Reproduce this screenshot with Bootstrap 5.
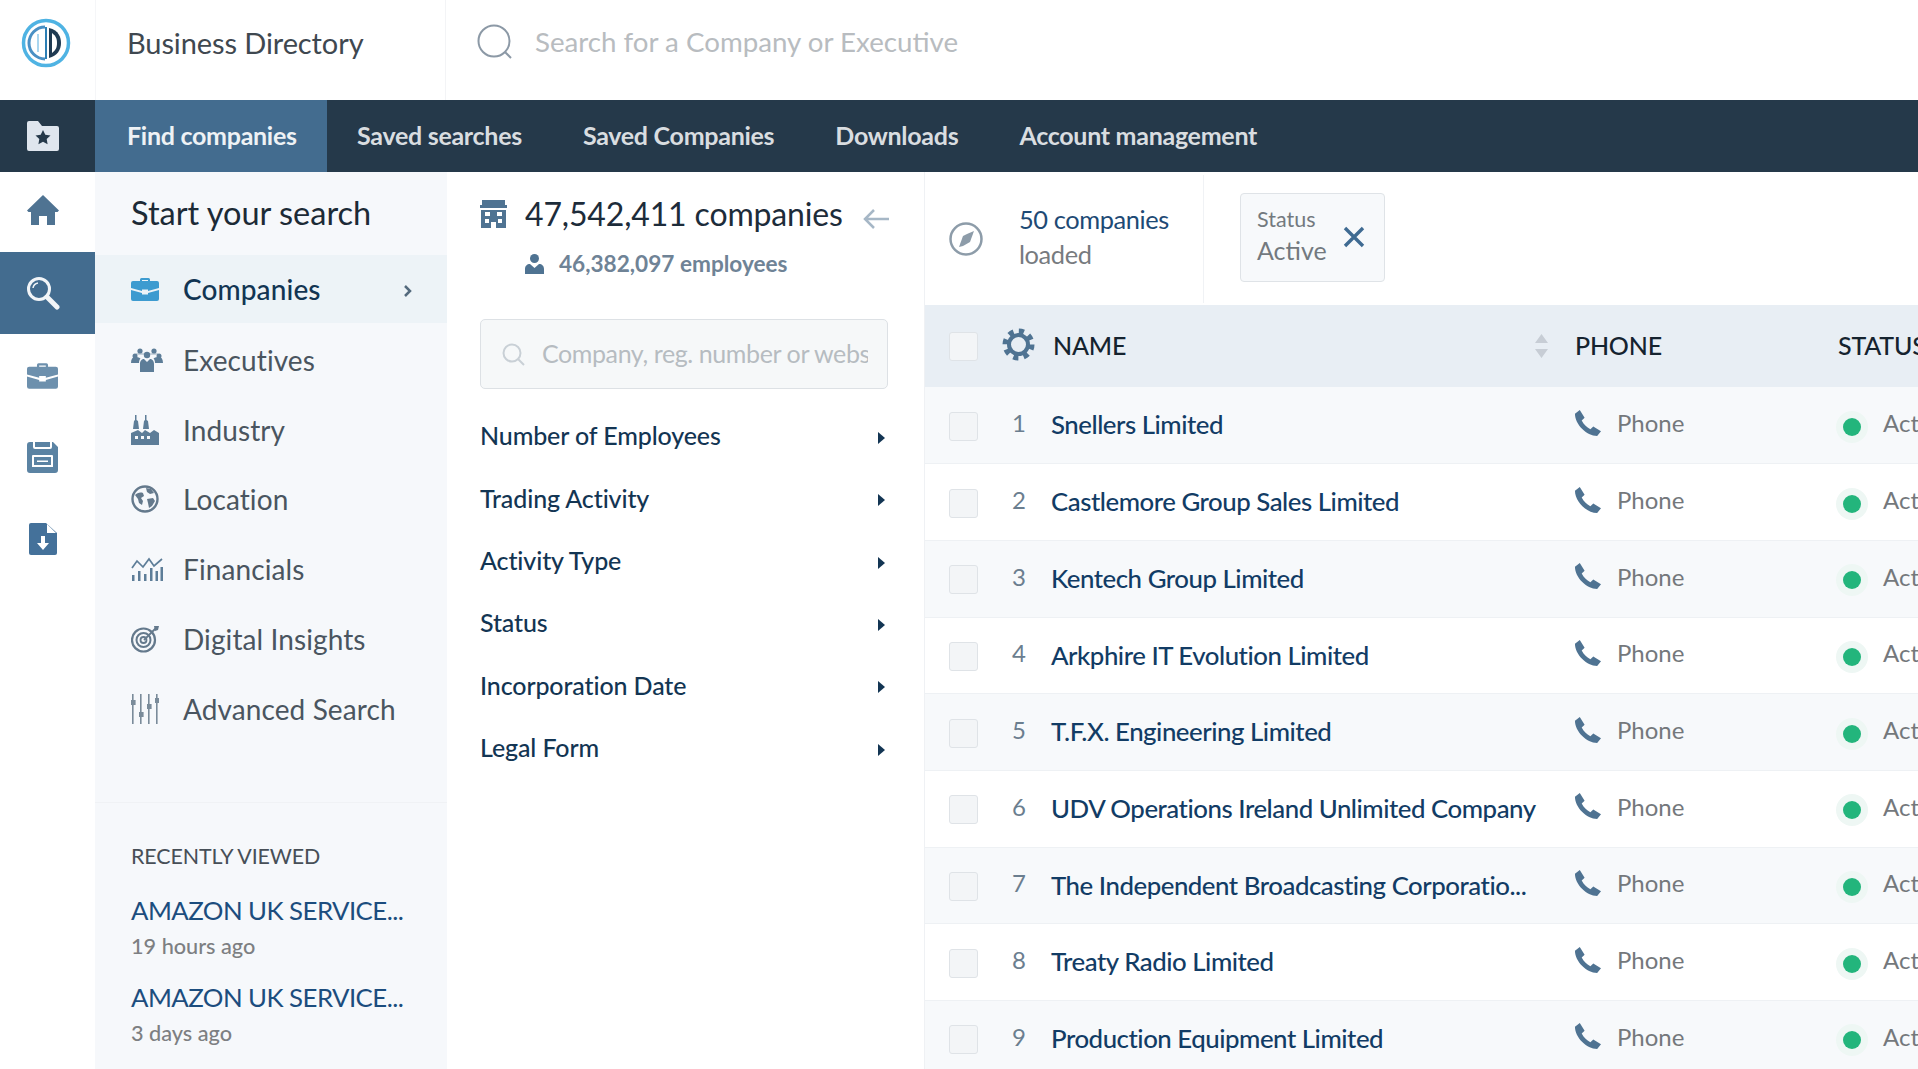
<!DOCTYPE html>
<html lang="en">
<head>
<meta charset="UTF-8">
<title>Business Directory</title>
<link href="https://cdn.jsdelivr.net/npm/bootstrap@5.3.3/dist/css/bootstrap.min.css" rel="stylesheet">
<style>
    html, body { height: 100%; overflow: hidden; }
    body { font-family: Lato, "Liberation Sans", sans-serif; background: #fff; color: #1d2c3a; width: 1918px; height: 1069px; }
    svg { display: block; flex: none; }

    /* top bar */
    .top-bar { height: 100px; }
    .logo-cell { width: 95px; padding: 0 4px 15px 0; }
    .brand-cell { width: 351px; padding: 0 0 15px 31px; border-right: 1px solid #f3f4f6; border-left: 1px solid #f5f6f8; font-size: 29px; color: #3f4850; letter-spacing: -.1px; }
    .top-search { padding: 0 0 16px 30px; gap: 21px; font-size: 27.7px; color: #b8bcc0; }

    /* dark nav */
    .main-nav { height: 72px; background: #25394a; padding: 0; flex-wrap: nowrap; justify-content: flex-start; }
    .nav-icon { width: 95px; padding-right: 10px; }
    .main-nav .nav-link { height: 72px; display: flex; align-items: center; padding: 0 30.5px; font-size: 25px; font-weight: 700; letter-spacing: -.28px; color: #d9dde0; }
    .main-nav .nav-link.active { background: #436c8f; color: #eef2f5; width: 232px; padding-left: 32px; padding-right: 0; }
    .main-nav .nav-item:nth-child(2) .nav-link { padding-left: 30px; }

    /* left rail */
    .work-area { height: 897px; }
    .rail { width: 95px; }
    .rail-item { height: 82px; padding-right: 10px; }
    .rail-item:first-child { height: 80px; padding-bottom: 4px; }
    .rail-item.on { background: #436c8f; }

    /* search sidebar */
    .side-panel { width: 352px; background: #f6f8fb; }
    .side-title { font-size: 32.5px; height: 83px; padding: 21px 0 0 36px; color: #1c2a36; line-height: 40px; }
    .side-link { height: 69.8px; padding-left: 36px; font-size: 28px; color: #4a5560; letter-spacing: .1px; }
    .side-link.on { background: #edf3f7; color: #123553; height: 68px; margin-bottom: 2px; font-weight: 500; }
    .side-ico { width: 52px; }
    .side-caret { margin: 3px 34px 0 auto; }
    .recent-box { margin-top: 58px; border-top: 1px solid #f0f2f5; padding: 40px 0 0 36px; }
    .recent-head { font-size: 21.4px; color: #474f57; line-height: 26px; margin-bottom: 24px; letter-spacing: -.1px; }
    .recent-name { font-size: 25.8px; line-height: 34px; color: #1c4d7e; letter-spacing: -.55px; }
    .recent-when { font-size: 21.7px; line-height: 28px; color: #7d7f82; font-weight: 500; margin-bottom: 20px; margin-top: 5px; }

    /* filter panel */
    .filter-panel { width: 478px; padding: 0 36px 0 33px; border-right: 1px solid #eff1f4; }
    .count-line { padding-top: 21px; font-size: 32px; line-height: 42px; color: #1d2c3a; letter-spacing: -.15px; }
    .count-line span { margin-left: 2px; }
    .count-arrow { margin-left: auto; margin-right: -2px; margin-top: 10px; }
    .emp-line { padding: 15px 0 0 45px; gap: 15px; font-size: 22.6px; line-height: 28px; font-weight: 700; color: #6f8396; }
    .filter-input { margin-top: 41px; height: 70px; background: #f6f8f9; border: 1px solid #dde1e5; border-radius: 5px; padding-left: 21px; gap: 17px; font-size: 25px; color: #b6bcc1; overflow: hidden; white-space: nowrap; padding-right: 19px; letter-spacing: -.4px; }
    .filter-input span { overflow: hidden; }
    .filter-list { margin-top: 16px; }
    .filter-row { height: 62.3px; font-size: 25px; font-weight: 500; color: #133553; letter-spacing: -.12px; }
    .filter-row i { width: 0; height: 0; margin: 4px 3px 0 0; border-left: 7px solid #133553; border-top: 6.5px solid transparent; border-bottom: 6.5px solid transparent; }

    /* results */
    .result-area { flex: 1; min-width: 0; overflow: hidden; }
    .tool-strip { height: 133px; }
    .loaded-cell { width: 279px; height: 128px; padding-left: 24px; gap: 36px; border-right: 1px solid #f0f2f5; }
    .loaded-text { font-size: 25.4px; line-height: 35px; color: #1e4a75; letter-spacing: -.4px; margin-top: -3px; }
    .loaded-text div + div { color: #777b7f; }
    .status-chip { margin-left: 36px; margin-top: -3px; width: 145px; height: 89px; background: #f7f9fb; border: 1px solid #dfe3e7; border-radius: 4px; padding: 0 0 0 16px; gap: 16px; }
    .chip-text { margin-top: -5px; }
    .status-chip small { display: block; font-size: 21.5px; line-height: 30px; color: #73797f; }
    .status-chip b { display: block; font-size: 25px; line-height: 32px; font-weight: 400; color: #73797f; }

    .co-table { table-layout: fixed; width: 1100px; margin: 0; border-collapse: collapse; }
    .co-table > :not(caption) > * > * { padding: 0; box-shadow: none; background: transparent; border: 0; vertical-align: middle; }
    .co-table thead tr { height: 82px; background: #e8eef4; }
    .co-table th { font-size: 25px; font-weight: 500; color: #15232f; letter-spacing: -.2px; }
    .co-table tbody tr { height: 76.7px; border-bottom: 1px solid #eef1f4; }
    .co-table tbody tr:nth-child(odd) { background: #f7f9fb; }
    .co-table .form-check-input { width: 29px; height: 29px; margin: 0 0 0 24px; background-color: #f3f5f7; border: 1px solid #dfe3e7; border-radius: 3px; display: block; float: none; }
    .co-table tbody .form-check-input { margin-top: 2px; }
    .row-num { font-size: 24px; color: #6b7e8f; padding: 0 0 4px 19px !important; }
    .row-name { font-size: 25.8px; font-weight: 500; color: #123c65; letter-spacing: -.47px; white-space: nowrap; padding-bottom: 1px !important; }
    .phone-cell { font-size: 24px; color: #74787c; margin-bottom: 4px; }
    .status-dot { width: 18px; height: 18px; border-radius: 50%; background: #23b57c; box-shadow: 0 0 0 7px #eef7f4; margin: 7px 22px 0 5px; flex: none; }
    .sort-pair { margin-right: 26px; }
    .gear-ico { margin: 0 0 4px 9px; }
    .name-head { padding-left: 2px; }
    .phone-head { padding-left: 1px !important; }
</style>
</head>
<body>

<svg width="0" height="0" class="position-absolute">
    <symbol id="i-brief" viewBox="0 0 28 24"><path fill="currentColor" d="M9 4V2.500A1.500 1.500 0 0 1 10.500 1h7A1.500 1.500 0 0 1 19 2.500V4h7a2 2 0 0 1 2 2v5l-11 3v-1.500h-6V14L0 11V6a2 2 0 0 1 2-2zm2 0h6V3h-6zM0 13l11 3v1.500h6V16l11-3v9a2 2 0 0 1-2 2H2a2 2 0 0 1-2-2z"/></symbol>
    <symbol id="i-people" viewBox="0 0 32 24"><g fill="currentColor"><circle cx="9" cy="3" r="2.600"/><circle cx="23" cy="3" r="2.600"/><circle cx="16" cy="7" r="3.200"/><circle cx="4" cy="8" r="2.500"/><circle cx="28" cy="8" r="2.500"/><path d="M4 9c-2.500 0-4 2-4 6h8c0-2 .5-3.500 1.500-4.500C8 9 6 9 4 9zM28 9c2.500 0 4 2 4 6h-8c0-2-.5-3.500-1.500-4.500C24 9 26 9 28 9zM9 24V16c0-3.500 2-5 4-5l3 3 3-3c2 0 4 1.500 4 5v8z"/><path d="M5 6.500h8v-1H5zM19 6.500h8v-1h-8z" opacity=".6"/></g></symbol>
    <symbol id="i-factory" viewBox="0 0 28 30"><g fill="currentColor"><path d="M4 0h1.500v5L7 6l1 8H2l1-8 1-1zM14 0h1.500v5L17 6l1 8h-6l1-8 1-1z"/><path d="M0 30V18l7-3 4 3 3-3 5 3 4-3 5 3v12zM4 21v3h3v-3zm6 0v3h3v-3zm6 0v3h3v-3z" fill-rule="evenodd"/></g></symbol>
    <symbol id="i-globe" viewBox="0 0 28 28"><circle cx="14" cy="14" r="12.500" fill="none" stroke="currentColor" stroke-width="2.400"/><path fill="currentColor" d="M4 10c2-2 5-3 8-2l1 3-3 2 2 3-1 4-3-2-1-4zM15 3l5 1 3 4-4 1-3-2zM16 14l6-1 2 3-3 5-3 2-1-5z"/></symbol>
    <symbol id="i-fin" viewBox="0 0 32 24"><g fill="currentColor"><path d="M1 18h2.500v6H1zM7 14h2.500v10H7zM13 17h2.500v7H13zM19 11h2.500v13H19zM24.500 14H27v10h-2.500zM29.500 10H32v14h-2.500z"/></g><path fill="none" stroke="currentColor" stroke-width="1.700" d="M1 11l5-7 6 6 6-8 5 7 8-7"/></symbol>
    <symbol id="i-target" viewBox="0 0 28 28"><g fill="none" stroke="currentColor"><circle cx="12.500" cy="15" r="11.500" stroke-width="2.200"/><circle cx="12.500" cy="15" r="7" stroke-width="2"/><circle cx="12.500" cy="15" r="3" stroke-width="1.800"/><path d="M13 15L25 3" stroke-width="1.800"/></g><path fill="currentColor" d="M23 1l5 0-1 4-3 1z"/></symbol>
    <symbol id="i-sliders" viewBox="0 0 28 30"><g fill="currentColor"><path d="M1 0h1.600v30H1zM9 0h1.600v30H9zM17 0h1.600v30H17zM25 0h1.600v30H25z"/><path d="M0 6h4.600v5H0zM8 18h4.600v5H8zM16 10h4.600v5H16zM24 4h4.600v5H24z"/></g></symbol>
    <symbol id="i-home" viewBox="0 0 32 30"><path fill="currentColor" d="M16 0L32 15.500l-1.500 1.500H28v13h-8v-9h-8v9H4V17H1.500L0 15.500z"/></symbol>
    <symbol id="i-phone" viewBox="0 0 28 28"><path fill="currentColor" d="M1 4L6 0l5 8-3 3c2 4 5 7 9 9l3-3 8 5-4 5C13 27 1 15 1 4z"/></symbol>
</svg>

<header class="top-bar d-flex">
    <div class="logo-cell d-flex align-items-center justify-content-center">
        <svg width="50" height="50" viewBox="0 0 50 50" fill="none">
            <circle cx="25" cy="25" r="22.500" stroke="#4fb3e3" stroke-width="3.500"/>
            <path d="M24 9A16 16 0 0 0 24 41" stroke="#4a90c4" stroke-width="3"/>
            <path d="M17 34V16" stroke="#8ec8ea" stroke-width="1.500"/>
            <path d="M25 9V41" stroke="#2d7fb5" stroke-width="2"/>
            <path d="M28 10C38 12 40 20 40 25C40 32 36 38 28 40Z" fill="#1f3a52"/>
            <path d="M31 15C35 18 36 21 36 25C36 29 35 32 31 35Z" fill="#fff"/>
        </svg>
    </div>
    <div class="brand-cell d-flex align-items-center">Business Directory</div>
    <div class="top-search d-flex align-items-center">
        <svg width="38" height="38" viewBox="0 0 38 38" fill="none" stroke="#8c99a6" stroke-width="2"><circle cx="18" cy="18" r="15.500"/><path d="M29 29l6 6"/></svg>
        <span>Search for a Company or Executive</span>
    </div>
</header>

<nav class="navbar main-nav">
    <div class="nav-icon d-flex align-items-center justify-content-center">
        <svg width="34" height="32" viewBox="0 0 34 32"><path fill="#dfe6ee" d="M1 3a2 2 0 0 1 2-2h9l4 5h15a2 2 0 0 1 2 2v21a2 2 0 0 1-2 2H3a2 2 0 0 1-2-2z"/><path fill="#25394a" d="M17 10l2.300 4.800 5.200.7-3.800 3.600.9 5.200L17 21.800l-4.600 2.500.9-5.200-3.800-3.600 5.200-.7z"/></svg>
    </div>
    <ul class="navbar-nav flex-row">
        <li class="nav-item"><a class="nav-link active" href="#">Find companies</a></li>
        <li class="nav-item"><a class="nav-link" href="#">Saved searches</a></li>
        <li class="nav-item"><a class="nav-link" href="#">Saved Companies</a></li>
        <li class="nav-item"><a class="nav-link" href="#">Downloads</a></li>
        <li class="nav-item"><a class="nav-link" href="#">Account management</a></li>
    </ul>
</nav>

<div class="work-area d-flex">
    <aside class="rail">
        <div class="rail-item d-flex align-items-center justify-content-center" style="color:#4f7392"><svg width="32" height="30"><use href="#i-home"/></svg></div>
        <div class="rail-item on d-flex align-items-center justify-content-center">
            <svg width="34" height="34" viewBox="0 0 34 34" fill="none" stroke="#f2f5f8"><circle cx="13" cy="13" r="10.500" stroke-width="3"/><path d="M21 21l10 10" stroke-width="5" stroke-linecap="round"/><path d="M7 12a6 6 0 0 1 5-5" stroke-width="1.500"/></svg>
        </div>
        <div class="rail-item d-flex align-items-center justify-content-center" style="color:#6d90ad"><svg width="31" height="27"><use href="#i-brief"/></svg></div>
        <div class="rail-item d-flex align-items-center justify-content-center">
            <svg width="31" height="31" viewBox="0 0 31 31"><path fill="#5b83a3" fill-rule="evenodd" d="M3 0h3v5a2 2 0 0 0 2 2h15a2 2 0 0 0 2-2V0h1l5 5v23a3 3 0 0 1-3 3H3a3 3 0 0 1-3-3V3a3 3 0 0 1 3-3zM8 0h15v5H8zM5 14a1 1 0 0 1 1-1h19a1 1 0 0 1 1 1v11H5zM7 15v8h17v-8z"/><path fill="#fff" d="M10 18.500h11V20H10z"/></svg>
        </div>
        <div class="rail-item d-flex align-items-center justify-content-center">
            <svg width="28" height="32" viewBox="0 0 28 32"><path fill="#44719a" d="M2 0h15l11 10v20a2 2 0 0 1-2 2H2a2 2 0 0 1-2-2V2a2 2 0 0 1 2-2z"/><path fill="#fff" d="M18 1v9h9zM12 13h4v7h4l-6 7-6-7h4z"/></svg>
        </div>
    </aside>

    <aside class="side-panel">
        <div class="side-title">Start your search</div>
        <a class="side-link on d-flex align-items-center text-decoration-none" href="#">
            <span class="side-ico" style="color:#3d9bd0"><svg width="28" height="24"><use href="#i-brief"/></svg></span>Companies
            <svg class="side-caret" width="10" height="14" viewBox="0 0 10 14" fill="none" stroke="#546a7d" stroke-width="2.500"><path d="M2 2l5 5-5 5"/></svg>
        </a>
        <a class="side-link d-flex align-items-center text-decoration-none" href="#"><span class="side-ico" style="color:#5d7d98"><svg width="32" height="24"><use href="#i-people"/></svg></span>Executives</a>
        <a class="side-link d-flex align-items-center text-decoration-none" href="#"><span class="side-ico" style="color:#5d7d98"><svg width="28" height="30"><use href="#i-factory"/></svg></span>Industry</a>
        <a class="side-link d-flex align-items-center text-decoration-none" href="#"><span class="side-ico" style="color:#64798c"><svg width="28" height="28"><use href="#i-globe"/></svg></span>Location</a>
        <a class="side-link d-flex align-items-center text-decoration-none" href="#"><span class="side-ico" style="color:#5d7d98"><svg width="32" height="24"><use href="#i-fin"/></svg></span>Financials</a>
        <a class="side-link d-flex align-items-center text-decoration-none" href="#"><span class="side-ico" style="color:#64798c"><svg width="28" height="28"><use href="#i-target"/></svg></span>Digital Insights</a>
        <a class="side-link d-flex align-items-center text-decoration-none" href="#"><span class="side-ico" style="color:#7a8b9a"><svg width="28" height="30"><use href="#i-sliders"/></svg></span>Advanced Search</a>
        <div class="recent-box">
            <div class="recent-head">RECENTLY VIEWED</div>
            <div class="recent-name">AMAZON UK SERVICE...</div>
            <div class="recent-when">19 hours ago</div>
            <div class="recent-name">AMAZON UK SERVICE...</div>
            <div class="recent-when">3 days ago</div>
        </div>
    </aside>

    <section class="filter-panel">
        <div class="count-line d-flex align-items-center">
            <svg width="27" height="29" viewBox="0 0 27 29" class="me-3"><path fill="#4f7392" fill-rule="evenodd" d="M2 0h23v5h2v3H0V5h2zM1 10h25v18H16v-6h-5v6H1zm4 2v4h5v-4zm12 0v4h5v-4zM5 19v4h4v-4zm13 0v4h4v-4z"/></svg>
            <span>47,542,411 companies</span>
            <svg class="count-arrow" width="28" height="22" viewBox="0 0 28 22" fill="none" stroke="#a6b7c6" stroke-width="2.500"><path d="M27 11H3M12 2l-9 9 9 9"/></svg>
        </div>
        <div class="emp-line d-flex align-items-center">
            <svg width="19" height="20" viewBox="0 0 19 20"><circle cx="9.500" cy="4.500" r="4.500" fill="#4f7392"/><path fill="#4f7392" d="M0 20v-5c0-3 2-5 5-5l4.500 4 4.500-4c3 0 5 2 5 5v5z"/></svg>
            <span>46,382,097 employees</span>
        </div>
        <div class="filter-input d-flex align-items-center">
            <svg width="23" height="23" viewBox="0 0 23 23" fill="none" stroke="#c9d0d6" stroke-width="2"><circle cx="10" cy="10" r="8.500"/><path d="M16 16l6 6"/></svg>
            <span>Company, reg. number or website</span>
        </div>
        <div class="filter-list">
            <div class="filter-row d-flex align-items-center justify-content-between">Number of Employees<i></i></div>
            <div class="filter-row d-flex align-items-center justify-content-between">Trading Activity<i></i></div>
            <div class="filter-row d-flex align-items-center justify-content-between">Activity Type<i></i></div>
            <div class="filter-row d-flex align-items-center justify-content-between">Status<i></i></div>
            <div class="filter-row d-flex align-items-center justify-content-between">Incorporation Date<i></i></div>
            <div class="filter-row d-flex align-items-center justify-content-between">Legal Form<i></i></div>
        </div>
    </section>

    <section class="result-area">
        <div class="tool-strip d-flex align-items-center">
            <div class="loaded-cell d-flex align-items-center">
                <svg width="34" height="34" viewBox="0 0 34 34"><circle cx="17" cy="17" r="15.500" fill="none" stroke="#8d9ca9" stroke-width="2.500"/><path fill="#8d9ca9" d="M25 9l-4 11-7 4-4 1 4-11 4-2z"/></svg>
                <div class="loaded-text"><div>50 companies</div><div>loaded</div></div>
            </div>
            <div class="status-chip d-flex align-items-center">
                <div class="chip-text"><small>Status</small><b>Active</b></div>
                <svg width="22" height="22" viewBox="0 0 22 22" fill="none" stroke="#3f6b92" stroke-width="3.400"><path d="M2 2l18 18M20 2L2 20"/></svg>
            </div>
        </div>
        <table class="table co-table">
            <colgroup><col style="width:68px"><col style="width:58px"><col style="width:523px"><col style="width:264px"><col></colgroup>
            <thead>
                <tr>
                    <th><input class="form-check-input" type="checkbox"></th>
                    <th><svg class="gear-ico" width="33" height="33" viewBox="0 0 33 33" fill="none" stroke="#4f7392"><circle cx="16.500" cy="16.500" r="13" stroke-width="6" stroke-dasharray="5 5.200"/><circle cx="16.500" cy="16.500" r="9.500" stroke-width="4"/></svg></th>
                    <th><div class="name-head d-flex align-items-center justify-content-between">NAME
                        <svg class="sort-pair" width="13" height="24" viewBox="0 0 13 24" fill="#c7cdd5"><path d="M6.500 0L13 9H0zM6.500 24L0 15h13z"/></svg></div></th>
                    <th class="phone-head">PHONE</th>
                    <th>STATUS</th>
                </tr>
            </thead>
            <tbody>
                <tr><td><input class="form-check-input" type="checkbox"></td><td class="row-num">1</td><td class="row-name">Snellers Limited</td><td><div class="phone-cell d-flex align-items-center gap-3"><svg width="27" height="27" style="color:#4f7392"><use href="#i-phone"/></svg>Phone</div></td><td><div class="d-flex align-items-center phone-cell"><span class="status-dot"></span>Active</div></td></tr>
                <tr><td><input class="form-check-input" type="checkbox"></td><td class="row-num">2</td><td class="row-name">Castlemore Group Sales Limited</td><td><div class="phone-cell d-flex align-items-center gap-3"><svg width="27" height="27" style="color:#4f7392"><use href="#i-phone"/></svg>Phone</div></td><td><div class="d-flex align-items-center phone-cell"><span class="status-dot"></span>Active</div></td></tr>
                <tr><td><input class="form-check-input" type="checkbox"></td><td class="row-num">3</td><td class="row-name">Kentech Group Limited</td><td><div class="phone-cell d-flex align-items-center gap-3"><svg width="27" height="27" style="color:#4f7392"><use href="#i-phone"/></svg>Phone</div></td><td><div class="d-flex align-items-center phone-cell"><span class="status-dot"></span>Active</div></td></tr>
                <tr><td><input class="form-check-input" type="checkbox"></td><td class="row-num">4</td><td class="row-name">Arkphire IT Evolution Limited</td><td><div class="phone-cell d-flex align-items-center gap-3"><svg width="27" height="27" style="color:#4f7392"><use href="#i-phone"/></svg>Phone</div></td><td><div class="d-flex align-items-center phone-cell"><span class="status-dot"></span>Active</div></td></tr>
                <tr><td><input class="form-check-input" type="checkbox"></td><td class="row-num">5</td><td class="row-name">T.F.X. Engineering Limited</td><td><div class="phone-cell d-flex align-items-center gap-3"><svg width="27" height="27" style="color:#4f7392"><use href="#i-phone"/></svg>Phone</div></td><td><div class="d-flex align-items-center phone-cell"><span class="status-dot"></span>Active</div></td></tr>
                <tr><td><input class="form-check-input" type="checkbox"></td><td class="row-num">6</td><td class="row-name">UDV Operations Ireland Unlimited Company</td><td><div class="phone-cell d-flex align-items-center gap-3"><svg width="27" height="27" style="color:#4f7392"><use href="#i-phone"/></svg>Phone</div></td><td><div class="d-flex align-items-center phone-cell"><span class="status-dot"></span>Active</div></td></tr>
                <tr><td><input class="form-check-input" type="checkbox"></td><td class="row-num">7</td><td class="row-name">The Independent Broadcasting Corporatio...</td><td><div class="phone-cell d-flex align-items-center gap-3"><svg width="27" height="27" style="color:#4f7392"><use href="#i-phone"/></svg>Phone</div></td><td><div class="d-flex align-items-center phone-cell"><span class="status-dot"></span>Active</div></td></tr>
                <tr><td><input class="form-check-input" type="checkbox"></td><td class="row-num">8</td><td class="row-name">Treaty Radio Limited</td><td><div class="phone-cell d-flex align-items-center gap-3"><svg width="27" height="27" style="color:#4f7392"><use href="#i-phone"/></svg>Phone</div></td><td><div class="d-flex align-items-center phone-cell"><span class="status-dot"></span>Active</div></td></tr>
                <tr><td><input class="form-check-input" type="checkbox"></td><td class="row-num">9</td><td class="row-name">Production Equipment Limited</td><td><div class="phone-cell d-flex align-items-center gap-3"><svg width="27" height="27" style="color:#4f7392"><use href="#i-phone"/></svg>Phone</div></td><td><div class="d-flex align-items-center phone-cell"><span class="status-dot"></span>Active</div></td></tr>
            </tbody>
        </table>
    </section>
</div>

<script src="https://cdn.jsdelivr.net/npm/bootstrap@5.3.3/dist/js/bootstrap.bundle.min.js"></script>
</body>
</html>
